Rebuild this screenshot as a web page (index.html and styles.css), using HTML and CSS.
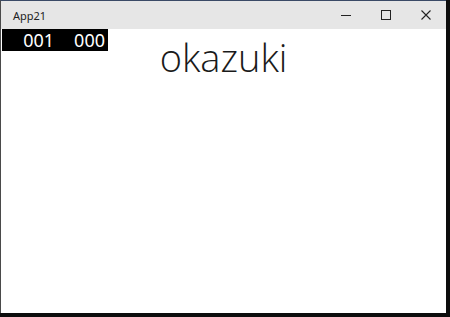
FILE: index.html
```html
<!DOCTYPE html>
<html>
<head>
<meta charset="utf-8">
<link rel="stylesheet" href="styles.css">
</head>
<body>
<div class="window">
  <div class="titlebar">
    <span class="title">App21</span>
    <div class="controls">
      <div class="ctl"><svg width="10" height="10" viewBox="0 0 10 10"><path d="M0 5.5h10" stroke="#222" stroke-width="1"/></svg></div>
      <div class="ctl"><svg width="10" height="10" viewBox="0 0 10 10"><rect x="0.5" y="0.5" width="9" height="9" fill="none" stroke="#222" stroke-width="1"/></svg></div>
      <div class="ctl"><svg width="10" height="10" viewBox="0 0 10 10"><path d="M0.5 0.5l9 9M9.5 0.5l-9 9" stroke="#222" stroke-width="1.1"/></svg></div>
    </div>
  </div>
  <div class="content">
    <div class="counter"><span>001</span><span>000</span></div>
    <div class="name">okazuki</div>
  </div>
</div>
</body>
</html>
```
FILE: styles.css
```css
html, body {
  margin: 0;
  padding: 0;
  background: #0d0d0d;
  width: 450px;
  height: 317px;
  overflow: hidden;
}
.window {
  width: 445px;
  height: 312px;
  border-left: 1px solid #4a4a4a;
  border-top: 1px solid #3a4a66;
  background: #fff;
  display: flex;
  flex-direction: column;
}
.titlebar {
  height: 28px;
  background: #e6e6e6;
  display: flex;
  align-items: center;
  justify-content: space-between;
}
.title {
  font-family: "Noto Sans", sans-serif;
  font-size: 11px;
  color: #222;
  margin-left: 12px;
}
.controls {
  display: flex;
  height: 100%;
}
.ctl {
  width: 40px;
  display: flex;
  align-items: center;
  justify-content: center;
}
.content {
  flex: 1;
  position: relative;
}
.counter {
  position: absolute;
  left: 1px;
  top: 0;
  width: 106px;
  height: 22px;
  background: #000;
  color: #fff;
  font-family: "Noto Sans", sans-serif;
  font-size: 18px;
  line-height: 22px;
  display: flex;
  justify-content: flex-end;
  gap: 20px;
  padding-right: 3px;
  box-sizing: border-box;
}
.name {
  text-align: center;
  font-family: "Open Sans", sans-serif;
  font-weight: 300;
  font-size: 38px;
  line-height: 46px;
  color: #1a1a1a;
  margin-top: 5px;
}
```
